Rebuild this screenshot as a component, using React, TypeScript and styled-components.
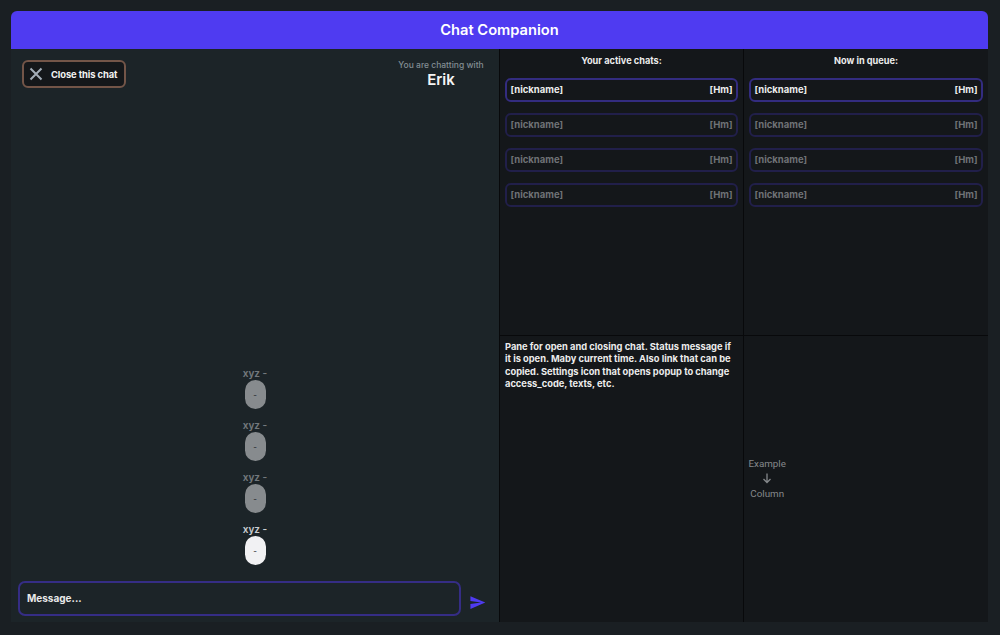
import React from "react";
import styled, { createGlobalStyle } from "styled-components";

const Global = createGlobalStyle`
  html, body { margin: 0; padding: 0; height: 100%; background: #1a1f23; }
  #root { height: 100%; }
  * { box-sizing: border-box; }
`;

const Page = styled.div`
  width: 1000px;
  height: 635px;
  padding: 11px 12px 13px 11px;
  display: flex;
  flex-direction: column;
  font-family: Inter, "Liberation Sans", sans-serif;
  overflow: hidden;
`;

const Header = styled.header`
  height: 38px;
  flex: none;
  background: #4f3bf1;
  border-radius: 6px 6px 0 0;
  color: #fff;
  display: flex;
  align-items: center;
  justify-content: center;
  font-size: 14.7px;
  font-weight: 600;
`;

const Body = styled.main`
  flex: 1;
  min-height: 0;
  display: grid;
  grid-template-columns: 488px 1fr;
`;

const ChatPane = styled.section`
  background: #1c2428;
  display: flex;
  flex-direction: column;
  min-height: 0;
`;

const ChatTop = styled.div`
  height: 46px;
  flex: none;
  padding: 11px 16px 0 11px;
  display: flex;
  justify-content: space-between;
  align-items: flex-start;
`;

const CloseButton = styled.button`
  width: 104px;
  height: 28px;
  padding: 0 0 0 5px;
  background: #14171a;
  border: 2px solid #735548;
  border-radius: 6px;
  color: #f2f2f2;
  font: 700 9.4px Inter, "Liberation Sans", sans-serif;
  letter-spacing: -0.1px;
  display: flex;
  align-items: center;
  gap: 8px;
`;

const Partner = styled.div`
  width: 84px;
  display: flex;
  flex-direction: column;
  align-items: center;
`;

const PartnerCaption = styled.div`
  font-size: 8.5px;
  font-weight: 500;
  color: #828d93;
  white-space: nowrap;
  line-height: 10px;
`;

const PartnerName = styled.div`
  font-size: 15px;
  font-weight: 600;
  color: #f4f4f4;
  line-height: 19px;
`;

const Messages = styled.div`
  flex: 1;
  min-height: 0;
  display: flex;
  flex-direction: column;
  justify-content: flex-end;
  align-items: center;
  gap: 10px;
  padding-bottom: 10px;
`;

const Message = styled.div<{ $dim?: boolean }>`
  width: 30px;
  display: flex;
  flex-direction: column;
  align-items: center;
  gap: 1px;
  opacity: ${(p) => (p.$dim ? 0.5 : 1)};
`;

const MessageMeta = styled.div`
  font-size: 10px;
  font-weight: 600;
  line-height: 12px;
  color: #c9ced1;
  white-space: nowrap;
`;

const Bubble = styled.div`
  width: 21px;
  height: 29px;
  border-radius: 10.5px;
  background: #f1f1f3;
  color: #23282c;
  font-size: 8px;
  display: flex;
  align-items: center;
  justify-content: center;
`;

const Composer = styled.div`
  flex: none;
  height: 47px;
  padding: 0 12px 0 7px;
  display: flex;
  align-items: center;
  gap: 9px;
`;

const MessageInput = styled.div`
  flex: 1;
  height: 35px;
  border: 2px solid #352d85;
  border-radius: 7px;
  background: #1c2428;
  padding: 0 0 1px 7px;
  display: flex;
  align-items: center;
  font-size: 10px;
  font-weight: 700;
  color: #e9e9e9;
`;

const SendIcon = styled.svg`
  width: 17px;
  height: 17px;
  flex: none;
  margin: 8px 1px 0 -1px;
  color: #4f3bf1;
`;

const Dashboard = styled.section`
  background: #14171a;
  display: grid;
  grid-template-columns: 244px 1fr;
  grid-template-rows: 285.5px 1fr;
  min-height: 0;
`;

const Cell = styled.div<{ $bottom?: boolean }>`
  min-width: 0;
  border-left: 1px solid #08090b;
  border-top: ${(p) => (p.$bottom ? "1px solid #08090b" : "none")};
`;

const ListCell = styled(Cell)`
  padding: 0 5px;
  display: flex;
  flex-direction: column;
`;

const ListTitle = styled.h2`
  margin: 0 0 6.5px;
  height: 22px;
  display: flex;
  align-items: center;
  justify-content: center;
  font-size: 9.2px;
  font-weight: 700;
  color: #ececec;
`;

const List = styled.div`
  display: flex;
  flex-direction: column;
  gap: 11px;
`;

const ChatRow = styled.div<{ $active?: boolean }>`
  height: 24px;
  border: 2px solid ${(p) => (p.$active ? "#332c80" : "#211f4a")};
  border-radius: 6px;
  padding: 0 3.5px;
  display: flex;
  align-items: center;
  justify-content: space-between;
  font-size: 9.5px;
  font-weight: 700;
  color: ${(p) => (p.$active ? "#ececec" : "#6f7276")};
`;

const NoteCell = styled(Cell)`
  padding: 5.5px 5px;
  font-size: 9.3px;
  font-weight: 700;
  line-height: 12.3px;
  color: #ececec;
`;

const ExampleCell = styled(Cell)`
  display: flex;
  align-items: center;
  padding-left: 4.5px;
`;

const Example = styled.div`
  display: flex;
  flex-direction: column;
  align-items: center;
  font-family: Roboto, "Liberation Sans", sans-serif;
  font-size: 9.8px;
  line-height: 12px;
  color: #85888b;
  margin-top: 1px;
`;

const ExampleArrow = styled.svg`
  width: 12px;
  height: 12px;
  margin: 2px 0 4px;
`;

const names = [true, false, false, false];

const ChatList = () => (
  <List>
    {names.map((active, i) => (
      <ChatRow key={i} $active={active}>
        <span>[nickname]</span>
        <span>[Hm]</span>
      </ChatRow>
    ))}
  </List>
);

export default function App() {
  return (
    <Page>
      <Global />
      <Header>Chat Companion</Header>
      <Body>
        <ChatPane>
          <ChatTop>
            <CloseButton>
              <svg width="14" height="14" viewBox="0 0 14 14" fill="none" stroke="#a3adb8" strokeWidth="2">
                <path d="M1.5 1.5l11 11M12.5 1.5l-11 11" />
              </svg>
              Close this chat
            </CloseButton>
            <Partner>
              <PartnerCaption>You are chatting with</PartnerCaption>
              <PartnerName>Erik</PartnerName>
            </Partner>
          </ChatTop>
          <Messages>
            {[true, true, true, false].map((dim, i) => (
              <Message key={i} $dim={dim}>
                <MessageMeta>xyz -</MessageMeta>
                <Bubble>-</Bubble>
              </Message>
            ))}
          </Messages>
          <Composer>
            <MessageInput>Message...</MessageInput>
            <SendIcon viewBox="0 0 24 24" fill="currentColor">
              <path d="M2.01 21L23 12 2.01 3 2 10l15 2-15 2z" />
            </SendIcon>
          </Composer>
        </ChatPane>
        <Dashboard>
          <ListCell>
            <ListTitle>Your active chats:</ListTitle>
            <ChatList />
          </ListCell>
          <ListCell>
            <ListTitle>Now in queue:</ListTitle>
            <ChatList />
          </ListCell>
          <NoteCell $bottom>
            Pane for open and closing chat. Status message if it is open. Maby current time. Also link that can be copied. Settings icon that opens popup to change access_code, texts, etc.
          </NoteCell>
          <ExampleCell $bottom>
            <Example>
              Example
              <ExampleArrow viewBox="0 0 24 24" fill="none" stroke="currentColor" strokeWidth="2.6">
                <path d="M12 3v18M5 14l7 7 7-7" />
              </ExampleArrow>
              Column
            </Example>
          </ExampleCell>
        </Dashboard>
      </Body>
    </Page>
  );
}
